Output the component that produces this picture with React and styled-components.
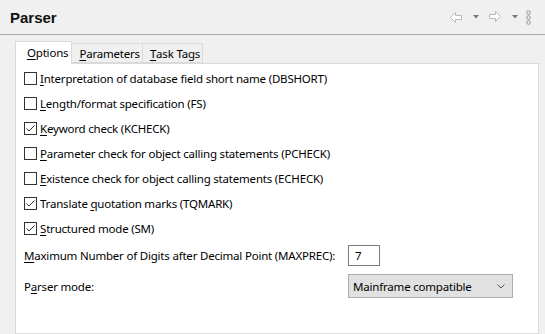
import React from 'react';
import styled, { createGlobalStyle } from 'styled-components';

const GlobalStyle = createGlobalStyle`
  html, body {
    margin: 0;
    padding: 0;
    background: #f0f0f0;
  }
  body {
    font-family: "Noto Sans", "Open Sans", sans-serif;
    font-size: 11.5px;
    letter-spacing: -0.2px;
    color: #000;
  }
`;

const Page = styled.div`
  width: 545px;
  height: 334px;
  display: flex;
  flex-direction: column;
  overflow: hidden;
  background: #f0f0f0;
`;

const Header = styled.div`
  height: 35px;
  box-sizing: border-box;
  border-bottom: 1px solid #a9a9a9;
  display: flex;
  align-items: center;
  justify-content: space-between;
  padding: 0 14px 0 10px;
`;

const Title = styled.h1`
  margin: 0;
  font-family: "Liberation Sans", Arial, sans-serif;
  font-size: 15px;
  font-weight: bold;
  letter-spacing: 0;
  color: #111;
`;

const IconBar = styled.div`
  display: flex;
  align-items: center;
  height: 20px;
`;

const Icon = styled.svg`
  display: block;
  margin-left: ${(p) => p.$ml || 0}px;
`;

const Body = styled.div`
  flex: 1;
  display: flex;
  flex-direction: column;
  padding: 8px 6px 0 15px;
`;

const TabStrip = styled.div`
  display: flex;
  align-items: flex-end;
  height: 20px;
  position: relative;
  z-index: 1;
`;

const Tab = styled.div`
  height: ${(p) => (p.$active ? 23 : 20)}px;
  box-sizing: border-box;
  margin-bottom: ${(p) => (p.$active ? -1 : 0)}px;
  padding: ${(p) => (p.$active ? '0 3px 2px 11px' : '0 2px 0 7px')};
  display: flex;
  align-items: center;
  background: ${(p) => (p.$active ? '#fff' : '#f0f0f0')};
  border: 1px solid #d9d9d9;
  border-bottom: ${(p) => (p.$active ? 'none' : '1px solid #d9d9d9')};
  border-left: ${(p) => (p.$first || p.$active ? '1px solid #d9d9d9' : 'none')};
  white-space: nowrap;
`;

const Panel = styled.div`
  flex: 1;
  background: #fff;
  border: 1px solid #d9d9d9;
  padding: 2px 8px 0 8px;
`;

const CheckRow = styled.label`
  display: flex;
  align-items: center;
  height: 25px;
  gap: 3px;
  white-space: nowrap;
`;

const Box = styled.span`
  width: 13px;
  height: 13px;
  box-sizing: border-box;
  border: 1px solid #333;
  background: #fff;
  display: flex;
  align-items: center;
  justify-content: center;
`;

const FieldGrid = styled.div`
  display: grid;
  grid-template-columns: auto auto;
  justify-content: start;
  column-gap: 13px;
  row-gap: 8px;
  align-items: center;
  margin-top: 4px;
`;

const Label = styled.span`
  white-space: nowrap;
`;

const NumberInput = styled.div`
  width: 32px;
  height: 21px;
  box-sizing: border-box;
  border: 1px solid #7a7a7a;
  background: #fff;
  padding-left: 6px;
  display: flex;
  align-items: center;
`;

const Select = styled.div`
  width: 165px;
  height: 24px;
  box-sizing: border-box;
  border: 1px solid #adadad;
  background: #e1e1e1;
  padding: 0 7px 0 4px;
  display: flex;
  align-items: center;
  justify-content: space-between;
`;

const U = styled.u`
  text-decoration: underline;
  text-underline-offset: 2px;
`;

const Check = ({ checked }) => (
  <Box>
    {checked && (
      <svg width="11" height="11" viewBox="0 0 11 11">
        <polyline points="1.5,5.5 4,8 9.5,2.5" fill="none" stroke="#333" strokeWidth="1" />
      </svg>
    )}
  </Box>
);

const Mn = ({ text, at = 0 }) => (
  <>
    {text.slice(0, at)}
    <U>{text[at]}</U>
    {text.slice(at + 1)}
  </>
);

const options = [
  { text: 'Interpretation of database field short name (DBSHORT)', at: 0, checked: false },
  { text: 'Length/format specification (FS)', at: 0, checked: false },
  { text: 'Keyword check (KCHECK)', at: 0, checked: true },
  { text: 'Parameter check for object calling statements (PCHECK)', at: 0, checked: false },
  { text: 'Existence check for object calling statements (ECHECK)', at: 0, checked: false },
  { text: 'Translate quotation marks (TQMARK)', at: 10, checked: true },
  { text: 'Structured mode (SM)', at: 0, checked: true },
];

const Arrow = ({ dir }) => (
  <svg width="12" height="11" viewBox="0 0 12 11">
    <path
      d="M0.5,5.5 L5.5,0.5 L5.5,3.5 L11.5,3.5 L11.5,7.5 L5.5,7.5 L5.5,10.5 Z"
      fill="#fff"
      stroke="#b9b9b9"
      transform={dir === 'right' ? 'matrix(-1 0 0 1 12 0)' : undefined}
    />
  </svg>
);

export default function App() {
  return (
    <Page>
      <GlobalStyle />
      <Header>
        <Title>Parser</Title>
        <IconBar>
          <Arrow dir="left" />
          <Icon $ml={11} width="6" height="4" viewBox="0 0 6 4">
            <path d="M0,0 L6,0 L3,3.5 Z" fill="#7a7a7a" />
          </Icon>
          <Icon $ml={10} as="span">
            <Arrow dir="right" />
          </Icon>
          <Icon $ml={11} width="6" height="4" viewBox="0 0 6 4">
            <path d="M0,0 L6,0 L3,3.5 Z" fill="#7a7a7a" />
          </Icon>
          <Icon $ml={8} width="5" height="15" viewBox="0 0 5 15">
            <circle cx="2.5" cy="2.5" r="1.8" fill="none" stroke="#8a8a8a" strokeWidth="0.9" />
            <circle cx="2.5" cy="7.5" r="1.8" fill="none" stroke="#8a8a8a" strokeWidth="0.9" />
            <circle cx="2.5" cy="12.5" r="1.8" fill="none" stroke="#8a8a8a" strokeWidth="0.9" />
          </Icon>
        </IconBar>
      </Header>
      <Body>
        <TabStrip>
          <Tab $active $first><Mn text="Options" /></Tab>
          <Tab><Mn text="Parameters" /></Tab>
          <Tab><Mn text="Task Tags" /></Tab>
        </TabStrip>
        <Panel>
          {options.map((o) => (
            <CheckRow key={o.text}>
              <Check checked={o.checked} />
              <span><Mn text={o.text} at={o.at} /></span>
            </CheckRow>
          ))}
          <FieldGrid>
            <Label><Mn text="Maximum Number of Digits after Decimal Point (MAXPREC):" /></Label>
            <NumberInput>7</NumberInput>
            <Label><Mn text="Parser mode:" at={1} /></Label>
            <Select>
              <span>Mainframe compatible</span>
              <svg width="8" height="5" viewBox="0 0 8 5">
                <polyline points="0.5,0.5 4,4 7.5,0.5" fill="none" stroke="#555" strokeWidth="1" />
              </svg>
            </Select>
          </FieldGrid>
        </Panel>
      </Body>
    </Page>
  );
}
